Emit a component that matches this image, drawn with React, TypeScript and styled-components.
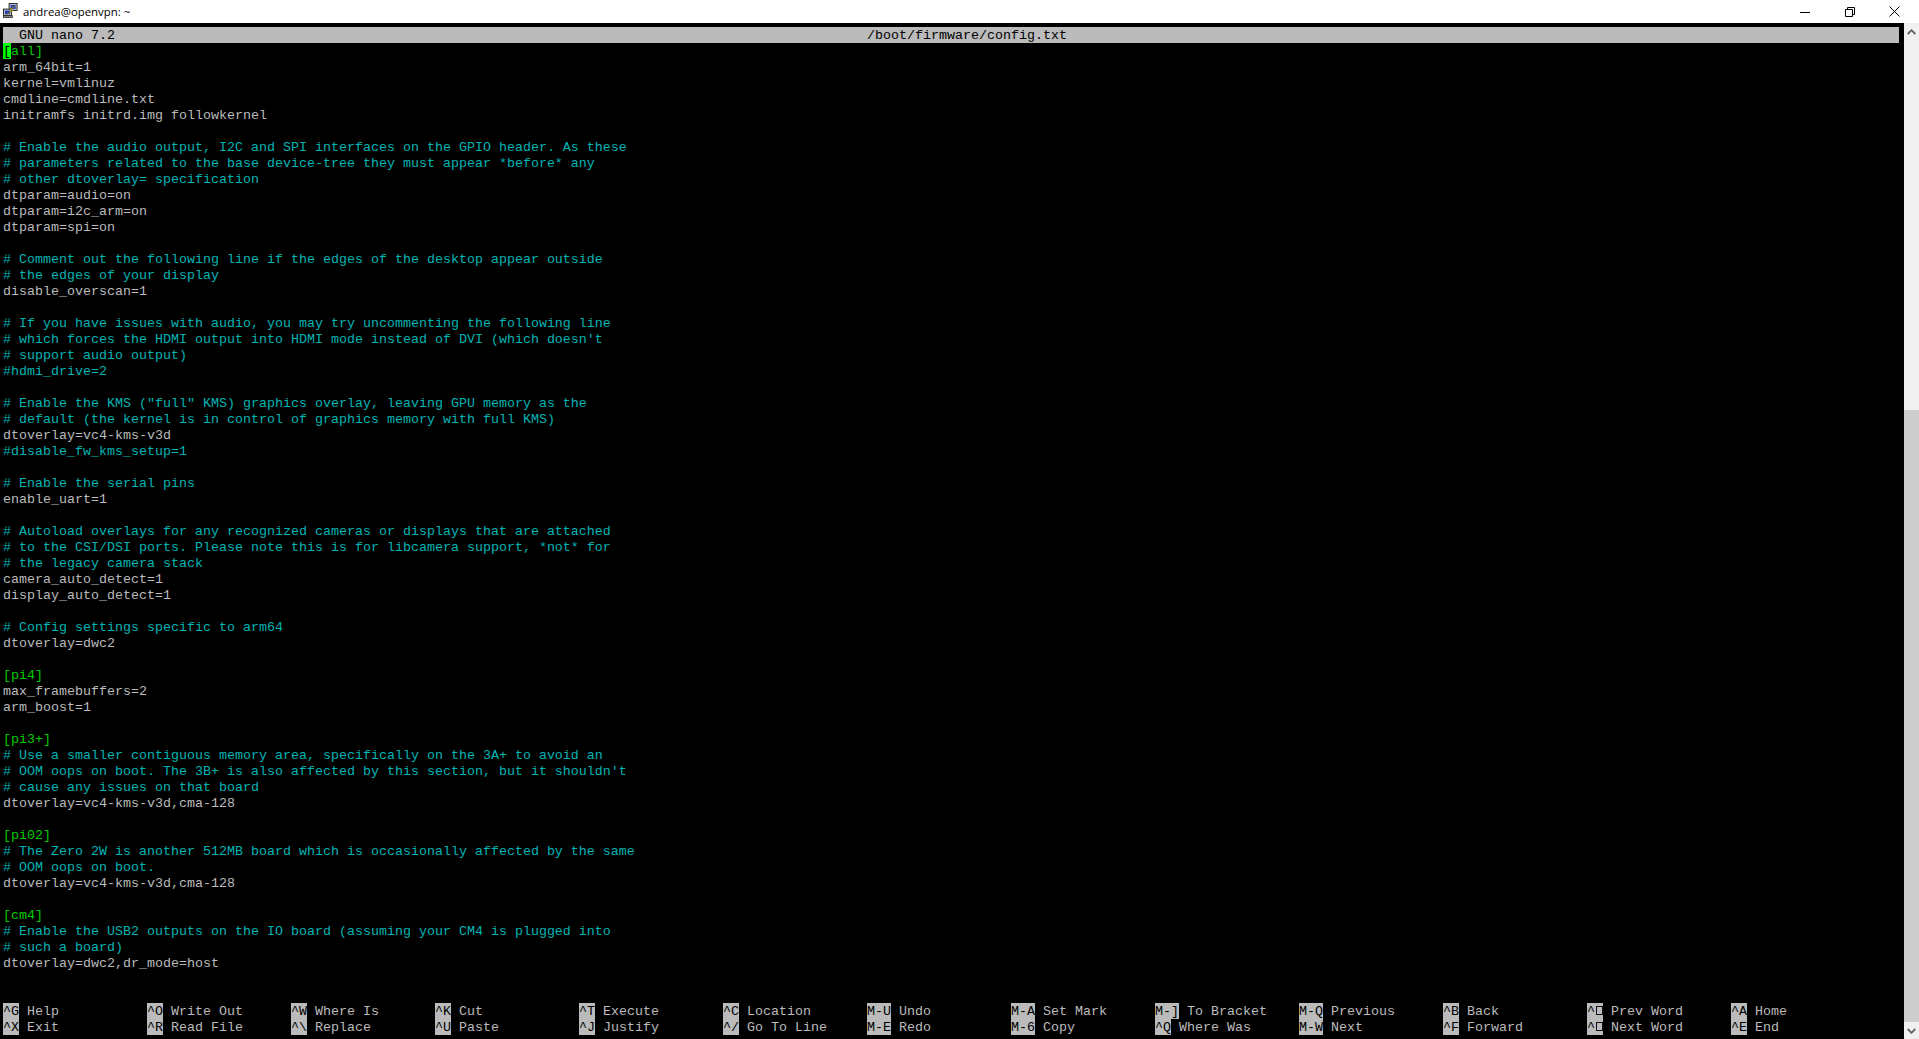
import React from "react";
import styled, { createGlobalStyle } from "styled-components";

const GlobalStyle = createGlobalStyle`
  html, body {
    margin: 0;
    padding: 0;
    background: #000;
    overflow: hidden;
  }
`;

const Window = styled.div`
  display: flex;
  flex-direction: column;
  width: 1919px;
  height: 1039px;
`;

const TitleBar = styled.div`
  display: flex;
  align-items: center;
  flex: 0 0 23px;
  background: #fff;
  padding: 0 2px 0 3px;
`;

const AppIcon = styled.svg`
  flex: 0 0 15px;
  width: 15px;
  height: 15px;
  align-self: flex-start;
  margin: 3px 5px 0 0;
`;

const TitleText = styled.span`
  flex: 1;
  font: 11.4px "Open Sans", "Noto Sans", sans-serif;
  color: #000;
`;

const WinButton = styled.div`
  display: flex;
  align-items: center;
  justify-content: center;
  width: 45px;
  height: 23px;
`;

const Body = styled.div`
  display: flex;
  flex: 1;
  min-height: 0;
`;

// line-height is 2px over the 16px cell so the glyphs sit 1px lower in it
const Screen = styled.div`
  flex: 0 0 1903px;
  padding: 4px 0 0 3px;
  box-sizing: border-box;
  background: #000;
  font-family: "Liberation Mono", "Courier New", monospace;
  font-size: 13.3333px;
  line-height: 18px;
  white-space: pre;
`;

const StatusBar = styled.div`
  display: flex;
  width: 1896px;
  height: 16px;
  background: #bbb;
  color: #000;
`;

const StatusName = styled.span`
  width: 864px;
  padding-left: 16px;
  box-sizing: border-box;
`;

const Row = styled.div<{ $kind: "plain" | "comment" | "section" }>`
  display: flex;
  height: 16px;
  color: ${(p) =>
    p.$kind === "comment" ? "#00b4b4" : p.$kind === "section" ? "#00cc00" : "#bbbbbb"};
`;

const Cursor = styled.span`
  background: #00ff00;
  color: #000;
`;

const HelpGrid = styled.div`
  display: grid;
  grid-template-columns: repeat(13, 144px);
  grid-auto-rows: 16px;
  margin-top: 32px;
`;

const HelpItem = styled.div`
  display: flex;
  color: #bbb;
`;

const Key = styled.span`
  background: #bbb;
  color: #000;
  margin-right: 8px;
`;

// the terminal has no glyph for nano's arrow keys and shows an empty box
const MissingGlyph = styled.span`
  display: inline-block;
  vertical-align: top;
  box-sizing: border-box;
  width: 7px;
  height: 9px;
  margin: 3px 0 0 1px;
  border: 1px solid #111;
`;

const ScrollBar = styled.div`
  display: flex;
  flex-direction: column;
  flex: 0 0 15px;
  margin-left: 1px;
  background: #f0f0f0;
`;

const ScrollButton = styled.div`
  display: flex;
  align-items: center;
  justify-content: center;
  flex: 0 0 17px;
`;

const ScrollTrack = styled.div`
  flex: 1;
  display: flex;
  flex-direction: column;
  justify-content: flex-end;
`;

const ScrollThumb = styled.div`
  height: 612px;
  background: #cdcdcd;
`;

const fileLines = [
  "arm_64bit=1",
  "kernel=vmlinuz",
  "cmdline=cmdline.txt",
  "initramfs initrd.img followkernel",
  "",
  "# Enable the audio output, I2C and SPI interfaces on the GPIO header. As these",
  "# parameters related to the base device-tree they must appear *before* any",
  "# other dtoverlay= specification",
  "dtparam=audio=on",
  "dtparam=i2c_arm=on",
  "dtparam=spi=on",
  "",
  "# Comment out the following line if the edges of the desktop appear outside",
  "# the edges of your display",
  "disable_overscan=1",
  "",
  "# If you have issues with audio, you may try uncommenting the following line",
  "# which forces the HDMI output into HDMI mode instead of DVI (which doesn't",
  "# support audio output)",
  "#hdmi_drive=2",
  "",
  '# Enable the KMS ("full" KMS) graphics overlay, leaving GPU memory as the',
  "# default (the kernel is in control of graphics memory with full KMS)",
  "dtoverlay=vc4-kms-v3d",
  "#disable_fw_kms_setup=1",
  "",
  "# Enable the serial pins",
  "enable_uart=1",
  "",
  "# Autoload overlays for any recognized cameras or displays that are attached",
  "# to the CSI/DSI ports. Please note this is for libcamera support, *not* for",
  "# the legacy camera stack",
  "camera_auto_detect=1",
  "display_auto_detect=1",
  "",
  "# Config settings specific to arm64",
  "dtoverlay=dwc2",
  "",
  "[pi4]",
  "max_framebuffers=2",
  "arm_boost=1",
  "",
  "[pi3+]",
  "# Use a smaller contiguous memory area, specifically on the 3A+ to avoid an",
  "# OOM oops on boot. The 3B+ is also affected by this section, but it shouldn't",
  "# cause any issues on that board",
  "dtoverlay=vc4-kms-v3d,cma-128",
  "",
  "[pi02]",
  "# The Zero 2W is another 512MB board which is occasionally affected by the same",
  "# OOM oops on boot.",
  "dtoverlay=vc4-kms-v3d,cma-128",
  "",
  "[cm4]",
  "# Enable the USB2 outputs on the IO board (assuming your CM4 is plugged into",
  "# such a board)",
  "dtoverlay=dwc2,dr_mode=host",
];

// nano fills the grid column by column, two rows per shortcut
const shortcuts = [
  ["^G", "Help"], ["^X", "Exit"],
  ["^O", "Write Out"], ["^R", "Read File"],
  ["^W", "Where Is"], ["^\\", "Replace"],
  ["^K", "Cut"], ["^U", "Paste"],
  ["^T", "Execute"], ["^J", "Justify"],
  ["^C", "Location"], ["^/", "Go To Line"],
  ["M-U", "Undo"], ["M-E", "Redo"],
  ["M-A", "Set Mark"], ["M-6", "Copy"],
  ["M-]", "To Bracket"], ["^Q", "Where Was"],
  ["M-Q", "Previous"], ["M-W", "Next"],
  ["^B", "Back"], ["^F", "Forward"],
  ["^", "Prev Word"], ["^", "Next Word"],
  ["^A", "Home"], ["^E", "End"],
];

const kindOf = (line: string) =>
  line.startsWith("#") ? "comment" : line.startsWith("[") ? "section" : "plain";

const App: React.FC = () => {
  // grid is written row by row, so pick the top row first and then the bottom
  const topRow = shortcuts.filter((_, i) => i % 2 === 0);
  const bottomRow = shortcuts.filter((_, i) => i % 2 === 1);

  return (
    <>
      <GlobalStyle />
      <Window>
        <TitleBar>
          <AppIcon viewBox="0 0 16 16">
            <rect x="6.5" y="0.5" width="8.5" height="7.5" fill="#c8c8c8" stroke="#222" />
            <rect x="8" y="2" width="5.5" height="4.5" fill="#2a3fb8" />
            <rect x="0.5" y="6.5" width="8.5" height="7" fill="#c8c8c8" stroke="#222" />
            <rect x="2" y="8" width="5.5" height="4" fill="#2a3fb8" />
            <rect x="0.5" y="13.5" width="9.5" height="2" fill="#8a8a8a" stroke="#222" strokeWidth="0.8" />
            <path d="M13 3 L7 7 L9.5 7.5 L4 12 L11 8 L8.5 7.5 Z" fill="#f5e02a" stroke="#6b5d00" strokeWidth="0.5" />
          </AppIcon>
          <TitleText>andrea@openvpn: ~</TitleText>
          <WinButton>
            <svg width="10" height="10" viewBox="0 0 10 10">
              <path d="M0 5.5H10" stroke="#000" />
            </svg>
          </WinButton>
          <WinButton>
            <svg width="10" height="10" viewBox="0 0 10 10" fill="none">
              <path d="M0.5 2.5H7.5V9.5H0.5Z M2.5 2.5V0.5H9.5V7.5H7.5" stroke="#000" />
            </svg>
          </WinButton>
          <WinButton>
            <svg width="11" height="11" viewBox="0 0 11 11">
              <path d="M0.5 0.5L10.5 10.5M10.5 0.5L0.5 10.5" stroke="#000" />
            </svg>
          </WinButton>
        </TitleBar>
        <Body>
          <Screen>
            <StatusBar>
              <StatusName>GNU nano 7.2</StatusName>
              <span>/boot/firmware/config.txt</span>
            </StatusBar>
            <Row $kind="section">
              <Cursor>[</Cursor>
              <span>all]</span>
            </Row>
            {fileLines.map((line, i) => (
              <Row key={i} $kind={kindOf(line)}>
                {line}
              </Row>
            ))}
            <HelpGrid>
              {[...topRow, ...bottomRow].map(([key, label], i) => (
                <HelpItem key={i}>
                  <Key>
                    {key}
                    {key === "^" && <MissingGlyph />}
                  </Key>
                  {label}
                </HelpItem>
              ))}
            </HelpGrid>
          </Screen>
          <ScrollBar>
            <ScrollButton>
              <svg width="9" height="6" viewBox="0 0 9 6">
                <path d="M0.7 5L4.5 1.2L8.3 5" fill="none" stroke="#606060" strokeWidth="1.8" />
              </svg>
            </ScrollButton>
            <ScrollTrack>
              <ScrollThumb />
            </ScrollTrack>
            <ScrollButton>
              <svg width="9" height="6" viewBox="0 0 9 6">
                <path d="M0.7 1L4.5 4.8L8.3 1" fill="none" stroke="#606060" strokeWidth="1.8" />
              </svg>
            </ScrollButton>
          </ScrollBar>
        </Body>
      </Window>
    </>
  );
};

export default App;
